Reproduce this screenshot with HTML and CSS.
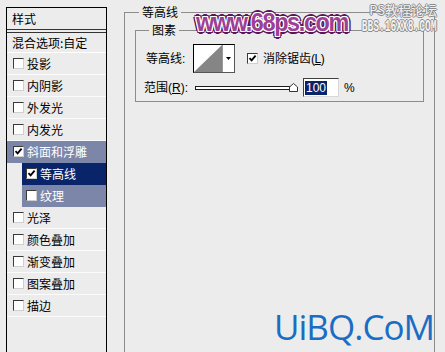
FILE: index.html
```html
<!DOCTYPE html>
<html lang="zh-CN">
<head>
<meta charset="utf-8">
<title>图层样式 - 等高线</title>
<link rel="stylesheet" href="styles.css">
</head>
<body>
<div class="dialog">
  <aside class="styles">
    <div class="styles-head">样式</div>
    <div class="styles-blend">混合选项:自定</div>
    <ul class="fx">
      <li class="fx-item"><span class="cb"></span>投影</li>
      <li class="fx-item"><span class="cb"></span>内阴影</li>
      <li class="fx-item"><span class="cb"></span>外发光</li>
      <li class="fx-item"><span class="cb"></span>内发光</li>
      <li class="fx-item active"><span class="cb"><svg viewBox="0 0 9 9" width="9" height="9"><path d="M1.5 4.2 L3.6 6.4 L7.6 1.6" fill="none" stroke="#000" stroke-width="1.8"/></svg></span>斜面和浮雕</li>
      <li class="fx-item sub selected"><span class="cb"><svg viewBox="0 0 9 9" width="9" height="9"><path d="M1.5 4.2 L3.6 6.4 L7.6 1.6" fill="none" stroke="#000" stroke-width="1.8"/></svg></span>等高线</li>
      <li class="fx-item sub active"><span class="cb"></span>纹理</li>
      <li class="fx-item"><span class="cb"></span>光泽</li>
      <li class="fx-item"><span class="cb"></span>颜色叠加</li>
      <li class="fx-item"><span class="cb"></span>渐变叠加</li>
      <li class="fx-item"><span class="cb"></span>图案叠加</li>
      <li class="fx-item"><span class="cb"></span>描边</li>
    </ul>
  </aside>
  <fieldset class="group group-outer">
    <legend>等高线</legend>
    <fieldset class="group group-inner">
      <legend>图素</legend>
      <div class="prow prow-contour">
        <span class="plabel">等高线:</span>
        <div class="swatch">
          <span class="swatch-curve"><svg viewBox="0 0 28 27" width="28" height="27"><polygon points="0,27 28,0 28,27" fill="#858585"/></svg></span>
          <span class="swatch-drop"><svg viewBox="0 0 5 3" width="5" height="3"><polygon points="0,0 5,0 2.5,3" fill="#000"/></svg></span>
        </div>
        <label class="check"><span class="cb"><svg viewBox="0 0 9 9" width="9" height="9"><path d="M1.5 4.2 L3.6 6.4 L7.6 1.6" fill="none" stroke="#000" stroke-width="1.8"/></svg></span><span>消除锯齿<span class="key">(<u>L</u>)</span></span></label>
      </div>
      <div class="prow prow-range">
        <span class="plabel">范围(<u>R</u>):</span>
        <div class="slider">
          <span class="track"></span>
          <svg class="thumb" viewBox="0 0 9 9" width="9" height="9"><polygon points="0.5,8.5 0.5,4 4.5,0.5 8.5,4 8.5,8.5" fill="#fff" stroke="#333" stroke-width="1"/></svg>
        </div>
        <span class="num"><span class="num-sel">100</span></span>
        <span class="pct">%</span>
      </div>
    </fieldset>
  </fieldset>
</div>
<div class="wm wm-68">www.68ps.com</div>
<div class="wm wm-bbs"><div class="bbs-title">PS教程论坛</div><div class="bbs-url"><span>BBS.16XX8.COM</span></div></div>
<div class="wm wm-uibq">UiBQ.CoM</div>
</body>
</html>
```
FILE: styles.css
```css
html, body {
  margin: 0;
  width: 445px;
  height: 352px;
  overflow: hidden;
}
body {
  position: relative;
  background: #ececec;
  font: 12px/14px "Noto Sans CJK SC", "Liberation Sans", sans-serif;
  color: #000;
  text-autospace: no-autospace;
}
.dialog {
  display: flex;
  align-items: flex-start;
}

/* left list of styles */
.styles {
  flex: none;
  margin: 7px 0 0 6px;
  width: 101px;
  height: 345px;
  box-sizing: border-box;
  border: 1px solid #000;
  border-bottom: none;
  background: #ececec;
  overflow: hidden;
}
.styles-head {
  height: 21px;
  line-height: 21px;
  padding-left: 5px;
  border-bottom: 1px solid #333;
}
.styles-blend {
  margin-top: 2px;
  border-top: 1px solid #333;
  border-bottom: 1px solid #fff;
  height: 19px;
  line-height: 19px;
  padding-left: 5px;
}
.fx {
  list-style: none;
  margin: 0;
  padding: 0;
}
.fx-item {
  display: flex;
  align-items: center;
  gap: 3px;
  height: 21px;
  padding-left: 6px;
  border-bottom: 1px solid #fbfbfb;
}
.fx-item.active {
  background: #7b86a8;
  border-bottom-color: #7b86a8;
  color: #fff;
}
.fx-item.selected {
  background: #0a246a;
  border-bottom-color: #0a246a;
  color: #fff;
}
.fx-item.sub {
  margin-left: 15px;
  padding-left: 4px;
}
.cb {
  flex: none;
  display: inline-flex;
  align-items: center;
  justify-content: center;
  width: 11px;
  height: 11px;
  box-sizing: border-box;
  background: #fff;
  border: 1px solid;
  border-color: #3a3a3a #cfcfcf #cfcfcf #3a3a3a;
}
.cb svg { display: block; }

/* group boxes */
.group {
  margin: 0;
  padding: 0;
  min-width: 0;
  box-sizing: border-box;
  border: 1px solid #8c8c8c;
}
.group > legend {
  padding: 0 3px;
  font-size: 12px;
  line-height: 14px;
}
.group-outer {
  flex: none;
  margin: 5px 0 0 17px;
  width: 311px;
  height: 347px;
  border-bottom: none;
}
.group-outer > legend { margin-left: 14px; }
.group-inner {
  margin: 4px 0 0 10px;
  width: 289px;
  padding: 7px 0 4px;
}
.group-inner > legend { margin-left: 13px; }

.prow {
  display: flex;
  align-items: center;
}
.plabel, .check {
  font-family: "Liberation Sans", "Noto Sans CJK SC", sans-serif;
}
.key {
  letter-spacing: -0.5px;
}
.prow-contour { height: 29px; }
.prow-contour .plabel {
  margin-left: 10px;
  width: 47px;
}
.swatch {
  display: flex;
  width: 42px;
  height: 29px;
  box-sizing: border-box;
  border: 1px solid;
  border-color: #000 #555 #555 #000;
  background: #fff;
}
.swatch-curve {
  width: 28px;
  display: flex;
  align-items: flex-end;
}
.swatch-curve svg { display: block; }
.swatch-drop {
  flex: 1;
  display: flex;
  align-items: center;
  justify-content: center;
  border-left: 1px solid #9a9a9a;
}
.swatch-drop svg { display: block; }
.check {
  display: flex;
  align-items: center;
  gap: 5px;
  margin-left: 12px;
}

.prow-range {
  margin-top: 5px;
  height: 19px;
}
.prow-range .plabel {
  margin-left: 8px;
  width: 51px;
}
.slider {
  position: relative;
  display: flex;
  align-items: center;
  width: 101px;
  height: 19px;
}
.track {
  display: block;
  width: 100%;
  height: 4px;
  box-sizing: border-box;
  border: 1px solid #1a1a1a;
  background: #fff;
}
.thumb {
  position: absolute;
  left: 94px;
  top: 5px;
  display: block;
}
.num {
  display: flex;
  align-items: center;
  margin-left: 7px;
  width: 36px;
  height: 19px;
  box-sizing: border-box;
  padding-left: 1px;
  border: 1px solid;
  border-color: #404040 #d8d8d8 #d8d8d8 #404040;
  background: #fff;
}
.num-sel {
  padding: 0 1px;
  background: #0a246a;
  color: #fff;
  font: 12px/14px "Liberation Sans", sans-serif;
}
.pct {
  margin-left: 5px;
  font: 12px/14px "Liberation Sans", sans-serif;
}

/* watermarks laid over the dialog */
.wm {
  position: absolute;
  white-space: nowrap;
}
.wm-68 {
  left: 196px;
  top: 7px;
  font: bold 26px/30px "Liberation Sans", sans-serif;
  letter-spacing: -1.5px;
  color: #9c3f96;
  transform: scaleX(0.9);
  transform-origin: left top;
  text-shadow:
    1px 0 #fff, -1px 0 #fff, 0 1px #fff, 0 -1px #fff,
    1px 1px #fff, -1px -1px #fff, 1px -1px #fff, -1px 1px #fff,
    2px 0 #5c1658, -2px 0 #5c1658, 0 2px #5c1658, 0 -2px #5c1658,
    2px 2px #5c1658, -2px -2px #5c1658, 2px -2px #5c1658, -2px 2px #5c1658,
    3px 0 #5c1658, -3px 0 #5c1658, 0 3px #5c1658, 0 -3px #5c1658;
}
.wm-bbs {
  right: 8px;
  top: 2px;
  text-align: right;
  color: #f2f2f2;
  text-shadow:
    1px 0 #8a8a8a, -1px 0 #8a8a8a, 0 1px #8a8a8a, 0 -1px #8a8a8a;
}
.bbs-title {
  font: 13px/16px "Noto Sans CJK SC", sans-serif;
}
.bbs-url {
  margin-top: 3px;
  height: 12px;
  font: bold 12px/12px "Liberation Mono", monospace;
}
.bbs-url span {
  display: inline-block;
  transform: scale(0.8, 1.35);
  transform-origin: right center;
}
.wm-uibq {
  left: 274px;
  top: 309px;
  font: 35px/35px "Open Sans", sans-serif;
  letter-spacing: -1px;
  color: #1b6cc5;
}
```
